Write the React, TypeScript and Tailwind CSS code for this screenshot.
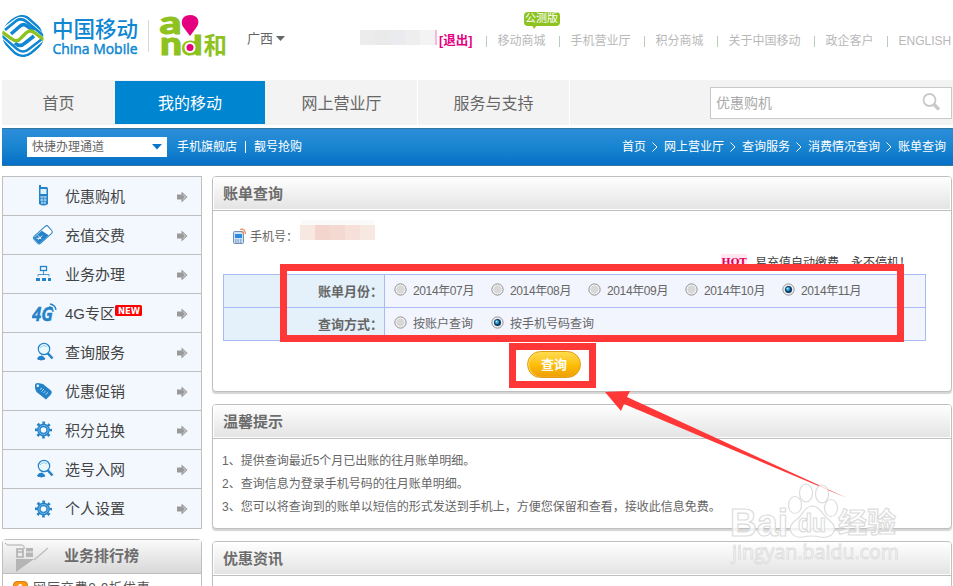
import React from "react";

const sans = "font-['Liberation_Sans','Noto_Sans_CJK_SC',sans-serif]";

function BrandLogo() {
  return (
    <svg width="230" height="80" viewBox="0 0 230 80">
      <defs>
        <clipPath id="globe">
          <path d="M22 15 C31 15 36 21 39 26 C42 31 44 34 43.500 40 C42 46 33 57 23 57 C14 57 10 51 7 47 C3 42 1.500 37 2.500 31 C4 25 14 15 22 15Z" />
        </clipPath>
      </defs>
      <g clipPath="url(#globe)" fill="none">
        <g stroke="#0f87d2" strokeWidth="2">
          <path d="M3 26 L14 18 Q21 13 28 18 L44 32" strokeWidth="2.400" />
          <path d="M5 30 L16 21 Q21 17 27 22 L44 36" strokeWidth="2.800" />
          <path d="M11 34 L19 27 Q23 23 27 26 L34 31" strokeWidth="3.600" />
          <path d="M2 40 L15 53 Q23 59 31 53 L44 42" strokeWidth="2.400" />
          <path d="M2 36 L17 49 Q23 54 29 49 L42 39" strokeWidth="2.400" />
          <path d="M15 43 Q20 48 25 43 L34 36" strokeWidth="3.600" />
        </g>
        <path d="M2 32 L12 39 Q17 43 21 38 L26 33 Q30 29 35 33 L44 40" stroke="#8dc21f" strokeWidth="3.400" />
      </g>
      <text x="52" y="37" fontSize="22" fontWeight="500" fill="#0f87d2" textLength="86" lengthAdjust="spacingAndGlyphs" fontFamily="'Noto Sans CJK SC', sans-serif">中国移动</text>
      <text x="52.500" y="53.500" fontSize="15" fill="#0f87d2" stroke="#0f87d2" strokeWidth=".5" textLength="85" lengthAdjust="spacingAndGlyphs" fontFamily="'Open Sans', sans-serif">China Mobile</text>
      <path d="M148.500 20V52" stroke="#d8d8d8" />
      <g fill="#8dc21f" stroke="#8dc21f" strokeWidth="1" fontFamily="Lato, sans-serif" fontWeight="900">
        <text x="159.500" y="34" fontSize="33" textLength="22" lengthAdjust="spacingAndGlyphs">a</text>
        <text x="160" y="55" fontSize="33" textLength="22" lengthAdjust="spacingAndGlyphs">n</text>
        <text x="181.500" y="55" fontSize="27" textLength="21" lengthAdjust="spacingAndGlyphs">d</text>
      </g>
      <text x="203.500" y="53.500" fontSize="23.500" fill="#8dc21f" fontWeight="700" fontFamily="'Noto Sans CJK SC', sans-serif">和</text>
      <path d="M190 15 C181 15 180 24 184 28 L190 36 L196 28 C201 22 198 15 190 15Z" fill="#e4007f" />
      <circle cx="190" cy="47.500" r="5.500" fill="#fff" />
      <circle cx="190" cy="47.500" r="3.500" fill="#e4007f" />
    </svg>
  );
}

function TopLink({ children, badge }: { children: React.ReactNode; badge?: boolean }) {
  return (
    <div className="flex items-center">
      <i className="ml-[13px] mr-[11px] h-[11px] w-px bg-[#b9cdb9]" />
      <span className="relative whitespace-nowrap">
        {children}
        {badge && (
          <span className="absolute -top-[19px] left-[26px] h-[14px] w-9 rounded-sm bg-[#8dc21f] text-center text-[11px] leading-[13px] text-white">
            公测版
            <svg className="absolute left-[7px] top-[13px]" width="7" height="5"><path d="M1 0H6L3 4Z" fill="#8dc21f" /></svg>
          </span>
        )}
      </span>
    </div>
  );
}

function Header() {
  return (
    <header className="flex h-20 shrink-0 items-start">
      <BrandLogo />
      <div className="ml-[17px] mt-[29px] flex w-[113px] items-center text-[13px] leading-5 text-[#666]">
        广西
        <svg className="ml-[3px]" width="10" height="6"><path d="M0 0H9L4.500 5Z" fill="#666" /></svg>
      </div>
      <div className="mt-[30px] flex h-[15px] w-[77px]">
        <i className="w-[15px] bg-[#ececec]" /><i className="w-[15px] bg-[#ebeaeb]" /><i className="w-[15px] bg-[#e9ebef]" /><i className="w-[15px] bg-[#eeeeef]" /><i className="w-[15px] bg-[#f4f3f4]" /><i className="w-[2px] bg-[#f9b7dc]" />
      </div>
      <div className="mt-[31px] flex h-5 items-center text-xs leading-5 text-[#b8b8b8]">
        <b className="ml-[2px] w-[33.5px] whitespace-nowrap text-[12.5px] text-[#e4007f]">[退出]</b>
        <TopLink badge>移动商城</TopLink>
        <TopLink>手机营业厅</TopLink>
        <TopLink>积分商城</TopLink>
        <TopLink>关于中国移动</TopLink>
        <TopLink>政企客户</TopLink>
        <TopLink>ENGLISH</TopLink>
      </div>
    </header>
  );
}

function Nav() {
  return (
    <nav className="ml-[2px] flex h-[45px] shrink-0 items-center bg-[#f3f3f3] text-base text-[#666]">
      <span className="h-full w-[113px] text-center leading-[47px]">首页</span>
      <span className="h-[43px] w-[150px] bg-[#0085d0] text-center leading-[45px] text-white">我的移动</span>
      <span className="h-full w-[153px] border-r border-white pl-px text-center leading-[47px]">网上营业厅</span>
      <span className="h-full w-[152px] border-r border-white text-center leading-[47px]">服务与支持</span>
      <div className="ml-auto mr-px flex h-8 w-[242px] items-center justify-between border border-[#c9c9c9] bg-white pl-[5px] pr-[10px] text-sm text-[#aaa]">
        优惠购机
        <svg width="19" height="19" fill="none" stroke="#c9c9c9"><circle cx="7.500" cy="7" r="6" strokeWidth="1.800" /><path d="M12 11.500L17 16.500" strokeWidth="3.400" /></svg>
      </div>
    </nav>
  );
}

function CrumbArrow() {
  return <svg className="mx-[6px] shrink-0" width="6" height="11" fill="none" stroke="#fff"><path d="M.5.5L5 5L.5 9.500" /></svg>;
}

function BlueBar() {
  return (
    <div className="ml-[2px] mt-[3px] flex h-[38px] shrink-0 items-center border-y border-[#34799d] bg-linear-to-b from-[#2c8dd9] via-[#1885d0] to-[#0670c7] pr-[7px] text-xs text-white">
      <div className="ml-[25px] flex h-5 w-[140px] items-center justify-between bg-white pl-[5px] pr-[5px] text-[#666]">
        快捷办理通道
        <svg width="10" height="6"><path d="M0 0H10L5 5.500Z" fill="#0878cb" /></svg>
      </div>
      <span className="ml-[10px]">手机旗舰店</span>
      <i className="mx-2 h-3 w-px bg-white" />
      <span>靓号抢购</span>
      <div className="ml-auto flex items-center whitespace-nowrap">
        首页<CrumbArrow />网上营业厅<CrumbArrow />查询服务<CrumbArrow />消费情况查询<CrumbArrow />账单查询
      </div>
    </div>
  );
}

function MenuIcon({ kind }: { kind: string }) {
  const blue = "#2482c8";
  if (kind === "phone")
    return <svg width="24" height="22"><path d="M8 0H10V2H15.500Q17 2 17 4V19Q12.500 22 8 19Z" fill={blue} /><path d="M9.500 4H15.500V9H9.500Z" fill="#dff3ff" /><path d="M9 12H16M9 15H16M10 18H15M11 11V19M14 11V19" stroke="#d8efff" strokeWidth=".7" /></svg>;
  if (kind === "card")
    return <svg width="24" height="22"><g transform="rotate(-42 12 11)"><rect x="2.500" y="6" width="19" height="9.500" rx="2" fill="#fff" stroke={blue} strokeWidth="1" /><path d="M3 7H14L16 15H3Z" fill={blue} /><path d="M5 9L8 12M8 8V13M5 11H11" stroke="#fff" strokeWidth=".8" /></g></svg>;
  if (kind === "tree")
    return <svg width="24" height="22" fill="none" stroke={blue}><rect x="9.500" y="3.500" width="6" height="4" strokeWidth="1.300" /><path d="M12.500 8V12M7 13.500V11.500H18V13.500" strokeWidth=".8" /><path d="M5 15H9V18H5ZM11 15H15V18H11ZM17 15H20V18H17Z" fill={blue} stroke="none" /></svg>;
  if (kind === "4g")
    return <svg width="26" height="22"><text x="0" y="19" fontSize="19" fontWeight="700" fontStyle="italic" fill={blue} stroke={blue} strokeWidth=".3" textLength="21" lengthAdjust="spacingAndGlyphs" fontFamily="'Open Sans', sans-serif">4G</text><path d="M17 5Q21 5 21 10M18 2Q23.500 3 24 8" fill="none" stroke={blue} strokeWidth="1.300" /></svg>;
  if (kind === "search")
    return <svg width="24" height="22" fill="none" stroke={blue}><circle cx="13" cy="8" r="5.700" fill="#e9f8ff" strokeWidth="1.200" /><path d="M9 7Q12 3 16 6" stroke="#8bcdf0" /><path d="M16.500 12L21.500 17.500" strokeWidth="2.600" /><path d="M6.500 18Q7 15 11 15Q13 16 14 18Q10 20 6.500 18Z" fill={blue} /></svg>;
  if (kind === "tag")
    return <svg width="24" height="22"><path d="M4 5Q4 3 7 3L12 4L20.500 11Q21.500 13 19.500 15L15 19.500L5.500 12Q3.500 9 4 5Z" fill={blue} /><circle cx="6.800" cy="5.800" r="1.200" fill="#fff" /><path d="M9 9.500L11 8M10.500 11.500L13 9M12.500 13L14.500 11M14.500 14.500L17 12.500" stroke="#c3e4fa" strokeWidth=".9" /></svg>;
  return (
    <svg width="24" height="22" fill="none" stroke={blue}>
      <circle cx="12.500" cy="11" r="4.600" strokeWidth="3.600" />
      <circle cx="12.500" cy="11" r="7.200" strokeWidth="2.600" strokeDasharray="2.600 3.055" strokeDashoffset="1.300" />
      <circle cx="12.500" cy="11" r="4.600" stroke="#8cc6ec" strokeWidth=".8" />
    </svg>
  );
}

const menu = [
  ["优惠购机", "phone"], ["充值交费", "card"], ["业务办理", "tree"], ["4G专区", "4g"], ["查询服务", "search"],
  ["优惠促销", "tag"], ["积分兑换", "gear"], ["选号入网", "search"], ["个人设置", "gear"],
];

function Sidebar() {
  return (
    <aside className="w-[200px] shrink-0">
      <ul className="border border-[#bfbfbf] bg-[#f3f8ff]">
        {menu.map(([label, icon], i) => (
          <li key={label} className={`flex h-[39px] items-center text-[15px] text-[#444] ${i < 8 ? "border-b border-[#bfbfbf]" : ""}`}>
            <span className={`flex shrink-0 ${icon === "4g" ? "ml-[29px] w-[33px]" : "ml-[28px] w-[34px]"}`}><MenuIcon kind={icon} /></span>
            <span className="whitespace-nowrap pt-[2px]">{label}</span>
            {icon === "4g" && (
              <svg className="-mt-[6px] shrink-0" width="27" height="11"><rect width="27" height="11" rx="1.500" fill="#f00" /><text x="3" y="8.500" fontSize="8" fontWeight="700" fill="#fff" textLength="22" lengthAdjust="spacingAndGlyphs" fontFamily="'DejaVu Sans', sans-serif">NEW</text></svg>
            )}
            <svg className="ml-auto mr-[13px] mt-px shrink-0" width="12" height="12"><path d="M1 3.500H5.500V.5L11.500 6L5.500 11.500V8.500H1Z" fill="#999" /><path d="M7 3.500L9.500 6L7 8.500" fill="none" stroke="#f3f8ff" strokeWidth=".7" /></svg>
          </li>
        ))}
      </ul>
      <section className="mt-[10px] h-[60px] rounded-t border border-[#bfbfbf]">
        <h2 className="flex h-[34px] items-center border-b border-[#bfbfbf] bg-linear-to-b from-[#fafafa] to-[#d8d8d8] text-[15px] font-bold text-[#6c6c6c]">
          <svg className="w-[61px] shrink-0" height="33" fill="none"><path d="M2 3Q4 6 8 5H18Q22 5 21 9" stroke="#aaa" /><path d="M14 17V9H20V17ZM14 12H20" stroke="#b0b0b0" strokeWidth="1.600" /><path d="M23 8H30V17H23ZM13 19H31L13 32Z" fill="#b5b5b5" /><path d="M23 12H30" stroke="#eee" /><path d="M31 20L45 8" stroke="#bbb" strokeWidth="1.200" /></svg>
          业务排行榜
        </h2>
        <div className="flex items-start bg-white pl-[10px] pt-[6px] text-[13px] leading-[18px] text-[#555]">
          <b className="mt-px h-[14px] w-[15px] rounded-sm border border-[#d97b18] bg-[#ff9710] text-center text-[11px] leading-3 text-white">1</b>
          <span className="-mt-px ml-[5px] whitespace-nowrap tracking-[.85px]">网厅交费9.9折优惠</span>
        </div>
      </section>
    </aside>
  );
}

function Panel({ title, className, children }: { title: string; className: string; children?: React.ReactNode }) {
  return (
    <section className={`shrink-0 overflow-hidden rounded border border-[#bfbfbf] bg-white shadow-[0_2px_1px_#d5d5d5] ${className}`}>
      <h2 className="h-[34px] border-b border-[#bfbfbf] bg-linear-to-b from-white to-[#e3e3e3] pl-[10px] text-[15px] font-bold leading-[33px] text-[#6c6c6c] shadow-[inset_0_-1px_0_#fff,inset_1px_0_0_#fff,inset_-1px_0_0_#fff]">{title}</h2>
      {children}
    </section>
  );
}

function Choice({ label, checked }: { label: string; checked?: boolean }) {
  return (
    <label className="flex w-[97px] shrink-0 items-center whitespace-nowrap">
      <svg className="-mt-[3px] mr-[6px] shrink-0" width="13" height="13">
        <circle cx="6.500" cy="6.500" r="5.600" fill="#fff" stroke="#8a8a8a" />
        <circle cx="6.500" cy="6.500" r="4.200" fill="#d8d8d8" />
        {checked && <><circle cx="6.500" cy="6.500" r="3.500" fill="#0b3f68" /><circle cx="6" cy="6" r="2" fill="#3ca7dd" /><circle cx="5.500" cy="5.500" r=".8" fill="#c9f0ff" /></>}
      </svg>
      <span className="pt-px">{label}</span>
    </label>
  );
}

function BillPanel() {
  const months = ["2014年07月", "2014年08月", "2014年09月", "2014年10月", "2014年11月"];
  return (
    <Panel title="账单查询" className="h-[216px]">
      <div className="flex h-[42px] items-start pl-[19px] text-xs text-[#666]">
        <svg className="mt-[16px]" width="16" height="18"><rect x="1.500" y="4.500" width="10" height="12" rx="1" fill="#cfe3f6" stroke="#6d8fb8" /><path d="M3 7H10V11H3Z" fill="#2c8de0" /><path d="M3 13H10M3 15H10" stroke="#557aa5" strokeDasharray="1.500 1" /><path d="M8 2.500Q13 1 13.500 7M9 5Q11 4 11.500 7" fill="none" stroke="#ed8553" strokeWidth="1.200" /></svg>
        <span className="ml-[2px] mt-[17px] w-[50px] whitespace-nowrap leading-[18px]">手机号：</span>
        <span className="mt-[14px] flex h-[15px] w-[75px] shadow-[0_-6px_0_-1px_#fafafa]">
          <i className="w-[15px] bg-[#f8e8e2]" /><i className="w-[15px] bg-[#f3d5cd]" /><i className="w-[15px] bg-[#f3d9d2]" /><i className="w-[15px] bg-[#f6e0d9]" /><i className="w-[15px] bg-[#f8e8e2]" />
        </span>
      </div>
      <div className="flex h-[21px] items-center pl-[508px] text-xs text-[#444]">
        <b className="mb-[3px] h-4 w-[26px] bg-[#ffe6f1] text-center font-['DejaVu_Serif',serif] text-[10px] leading-4 text-[#e4005c]">HOT</b>
        <span className="ml-2 whitespace-nowrap pb-[2px]">易充值自动缴费，永不停机！</span>
      </div>
      <div className="ml-[10px] grid h-[67px] w-[703px] grid-cols-[161px_1fr] grid-rows-2 border border-[#a9bbf5] text-xs text-[#666]">
        <b className="flex items-center justify-end border-b border-r border-[#a9bbf5] bg-[#e4f0fa] pr-px pt-px text-[13px]">账单月份：</b>
        <div className="flex items-center border-b border-[#a9bbf5] bg-[#f2f5fd] pl-[9px] tracking-[-.38px]">
          {months.map((m, i) => <Choice key={m} label={m} checked={i === 4} />)}
        </div>
        <b className="flex items-center justify-end border-r border-[#a9bbf5] bg-[#e4f0fa] pr-px pt-px text-[13px]">查询方式：</b>
        <div className="flex items-center bg-[#f2f5fd] pl-[9px]">
          <Choice label="按账户查询" />
          <Choice label="按手机号码查询" checked />
        </div>
      </div>
      <button className="ml-[314px] mt-[10px] block h-[27px] w-[54px] rounded-full border border-[#e39a14] bg-linear-to-b from-[#ffdc4a] via-[#fcbf05] to-[#ef9f06] text-[13px] font-bold leading-6 text-white shadow-[inset_1px_0_1px_#ffe17c]">查询</button>
    </Panel>
  );
}

function Annotations() {
  return (
    <>
      <div className="absolute left-[280px] top-[264px] h-[78px] w-[624px] border-[7px] border-[#ff3737]" />
      <div className="absolute left-[509px] top-[343px] h-[45px] w-[87px] border-[7px] border-[#ff3737]" />
      <svg className="absolute inset-0" width="953" height="586">
        <path d="M605 392L630 391L627 397L847 498L624 404L621 411Z" fill="#ff3737" />
        <g fill="#fff" fillOpacity=".75" stroke="#dcdcdc" strokeWidth="1.200">
          <text x="730" y="536" fontSize="39" fontWeight="700" textLength="58" lengthAdjust="spacingAndGlyphs" fontFamily="'Liberation Sans', sans-serif">Bai</text>
          <ellipse cx="795" cy="505" rx="6.500" ry="8.500" />
          <ellipse cx="806" cy="493" rx="6.500" ry="9" />
          <ellipse cx="822" cy="494" rx="6.500" ry="9" />
          <ellipse cx="831" cy="508" rx="6.500" ry="8.500" />
          <path d="M812 506C803 507 803 516 796 520C785 528 792 539 803 537Q812 535 820 537C834 539 839 528 829 520C822 515 820 506 812 506Z" />
          <text x="798" y="532" fontSize="26" fontWeight="700" textLength="28" lengthAdjust="spacingAndGlyphs" fontFamily="'Liberation Sans', sans-serif">du</text>
          <text x="838" y="533" fontSize="28" fontWeight="700" textLength="58" lengthAdjust="spacingAndGlyphs" fontFamily="'Noto Sans CJK SC', sans-serif">经验</text>
          <text x="732" y="559" fontSize="20" textLength="167" lengthAdjust="spacingAndGlyphs" strokeWidth=".9" fontFamily="'Open Sans', sans-serif">jingyan.baidu.com</text>
        </g>
      </svg>
    </>
  );
}

export default function App() {
  return (
    <div className={`relative flex h-[586px] w-[953px] flex-col overflow-hidden bg-white ${sans}`}>
      <Header />
      <Nav />
      <BlueBar />
      <main className="ml-[2px] mr-px mt-[10px] flex gap-[10px]">
        <Sidebar />
        <div className="flex w-[740px] flex-col">
          <BillPanel />
          <Panel title="温馨提示" className="mt-3 h-[125px]">
            <ol className="pl-[9px] pt-[11px] text-xs leading-[23px] text-[#666]">
              <li>1、提供查询最近5个月已出账的往月账单明细。</li>
              <li>2、查询信息为登录手机号码的往月账单明细。</li>
              <li>3、您可以将查询到的账单以短信的形式发送到手机上，方便您保留和查看，接收此信息免费。</li>
            </ol>
          </Panel>
          <Panel title="优惠资讯" className="mt-3 h-[80px]" />
        </div>
      </main>
      <Annotations />
    </div>
  );
}
